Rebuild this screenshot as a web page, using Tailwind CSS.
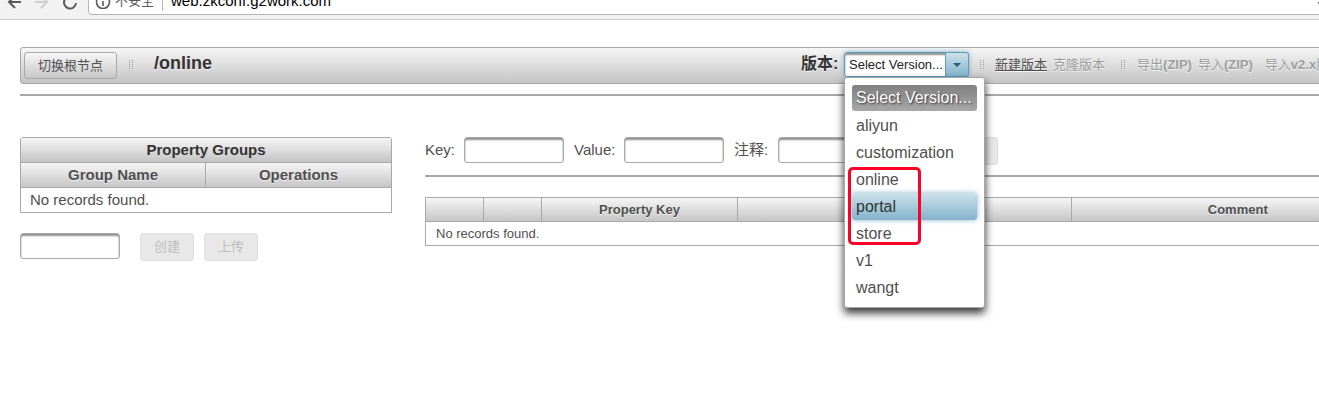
<!DOCTYPE html>
<html lang="zh-CN">
<head>
<meta charset="utf-8">
<title>zkconf</title>
<script src="https://cdn.jsdelivr.net/npm/@tailwindcss/browser@4"></script>
</head>
<body class="min-h-screen overflow-x-hidden bg-white font-['Liberation_Sans','Noto_Sans_CJK_SC',sans-serif] text-base text-[#4f4f4f]">

<!-- Browser address bar -->
<header class="flex h-5 items-end overflow-hidden border-b border-[#cccccc] bg-[#f2f2f2] pl-1.5">
  <nav class="flex h-8 shrink-0 items-center gap-3 pb-0.5">
    <button aria-label="Back" class="size-4"><svg viewBox="0 0 16 16" class="size-4" fill="none" stroke="#5a5a5a" stroke-width="2"><path d="M15 8H3M9 2L3 8l6 6"/></svg></button>
    <button aria-label="Forward" class="size-4" disabled><svg viewBox="0 0 16 16" class="size-4" fill="none" stroke="#cfcfcf" stroke-width="2"><path d="M1 8h12M7 2l6 6-6 6"/></svg></button>
    <button aria-label="Reload" class="size-4"><svg viewBox="0 0 16 16" class="size-4" fill="none" stroke="#5a5a5a" stroke-width="2"><path d="M14 9A6 6 0 1 1 12 4"/></svg></button>
  </nav>
  <div class="mb-1 ml-[10px] -mr-4 flex h-7 grow items-center rounded-sm border border-[#b5b5b5] bg-white pl-1.5 text-[15px] text-black">
    <svg viewBox="0 0 16 16" class="size-4" fill="none" stroke="#5a5a5a" stroke-width="1.6"><circle cx="8" cy="9" r="6.5"/><path d="M8 8v5M8 5v2"/></svg>
    <span class="ml-1 text-[13px] text-[#5a5a5a]">不安全</span>
    <span class="mx-2 h-5 border-l border-[#b5b5b5]"></span>
    <span>web.zkconf.g2work.com</span>
    <svg viewBox="0 0 16 16" class="ml-auto size-4" fill="#5a5a5a"><path d="M8 0l2 4 5 1-4 3 1 5-4-2-7 1-1-3 4-1-3-3 5-1z"/></svg>
  </div>
</header>

<main class="-mr-[86px] pl-5 pt-[27px]">
  <!-- Toolbar -->
  <div class="flex h-[37px] items-center rounded-[3px] border border-[#a8a8a8] bg-linear-to-b from-[#f6f6f6] to-[#c4c4c4] pb-0.5 pl-[3px] text-[13px] [text-shadow:0_1px_0_rgba(255,255,255,.7)]">
    <button class="mt-1 h-[27px] w-[93px] shrink-0 self-start rounded-[3px] border border-[#a8a8a8] bg-linear-to-b from-[#f6f6f6] to-[#c8c8c8] leading-6">切换根节点</button>
    <svg viewBox="0 0 4 10" class="ml-3 h-[10px] w-1 shrink-0" fill="#999"><path d="M0 0h1v1H0zM3 0h1v1H3zM0 2h1v1H0zM3 2h1v1H3zM0 4h1v1H0zM3 4h1v1H3zM0 6h1v1H0zM3 6h1v1H3zM0 8h1v1H0zM3 8h1v1H3z"/></svg>
    <h1 class="ml-[21px] w-[647px] shrink-0 pb-1 text-lg font-bold text-[#333]">/online</h1>
    <label for="version" class="w-[43px] shrink-0 pb-0.5 text-base font-bold text-[#333]">版本:</label>
    <div class="relative h-[25px] w-[125px] shrink-0 rounded-[3px] shadow-[0_0_5px_#85b2cb]">
      <select id="version" class="block h-[25px] w-full appearance-none rounded-[3px] border border-[#5f9bb7] bg-white pl-1 pr-6 text-[13px] text-[#222] shadow-[inset_0_2px_2px_#8f8f8f]">
        <option>Select Version...</option><option>aliyun</option><option>customization</option><option>online</option><option>portal</option><option>store</option><option>v1</option><option>wangt</option>
      </select>
      <span class="pointer-events-none absolute inset-y-0 right-0 flex w-6 items-center justify-center rounded-r-[3px] border border-[#5f9bb7] bg-linear-to-b from-[#cce1ea] to-[#83b3cc]"><svg viewBox="0 0 8 4" class="h-1 w-2" fill="#2d5972"><path d="M0 0h8L4 4z"/></svg></span>

      <!-- Open version list -->
      <ul role="listbox" aria-label="版本" class="absolute left-0 top-[25px] z-10 h-[231px] w-[141px] rounded-[3px] border border-[#a8a8a8] bg-white p-[7px] text-base leading-[27px] text-[#4f4f4f] shadow-[0_5px_8px_#000c] [text-shadow:none]">
        <li role="option" aria-selected="true" class="mb-px h-[26px] rounded-[3px] bg-linear-to-b from-[#808080] to-[#a8a8a8] px-1 leading-[26px] text-white [text-shadow:1px_1px_2px_#333]">Select Version...</li>
        <li role="option" class="px-1">aliyun</li>
        <li role="option" class="px-1">customization</li>
        <li role="option" class="px-1">online</li>
        <li role="option" class="rounded-[3px] bg-linear-to-b from-[#cce1ea] to-[#83b3cc] px-1 text-[#333] shadow-[0_0_5px_#85b2cb]">portal</li>
        <li role="option" class="px-1">store</li>
        <li role="option" class="px-1">v1</li>
        <li role="option" class="px-1">wangt</li>
      </ul>
      <div class="pointer-events-none absolute left-1 top-[115px] z-20 h-[78px] w-[73px] rounded-[5px] border-3 border-[#ff0028]"></div>
    </div>
    <svg viewBox="0 0 4 10" class="ml-[11px] h-[10px] w-1 shrink-0" fill="#999"><path d="M0 0h1v1H0zM3 0h1v1H3zM0 2h1v1H0zM3 2h1v1H3zM0 4h1v1H0zM3 4h1v1H3zM0 6h1v1H0zM3 6h1v1H3zM0 8h1v1H0zM3 8h1v1H3z"/></svg>
    <a href="#" class="ml-[11px] shrink-0 underline">新建版本</a>
    <span class="ml-[6px] shrink-0 text-[#9d9d9d]">克隆版本</span>
    <svg viewBox="0 0 4 10" class="ml-4 h-[10px] w-1 shrink-0" fill="#999"><path d="M0 0h1v1H0zM3 0h1v1H3zM0 2h1v1H0zM3 2h1v1H3zM0 4h1v1H0zM3 4h1v1H3zM0 6h1v1H0zM3 6h1v1H3zM0 8h1v1H0zM3 8h1v1H3z"/></svg>
    <span class="ml-3 shrink-0 text-[#9d9d9d]">导出<b>(ZIP)</b></span>
    <span class="ml-[6px] shrink-0 text-[#9d9d9d]">导入<b>(ZIP)</b></span>
    <span class="ml-3 shrink-0 text-[#9d9d9d]">导入<b>v2.x</b>版本</span>
  </div>
  <hr class="mt-[10px] border-t-2 border-[#a8a8a8]">

  <div class="mt-[41px] flex items-start gap-[33px]">
    <!-- Property groups -->
    <section class="w-[372px] shrink-0">
      <div class="overflow-hidden rounded-t-[3px] border border-[#a8a8a8]">
        <table class="w-full table-fixed border-separate border-spacing-0 text-[15px] leading-6">
          <caption class="h-[25px] border-b border-[#a8a8a8] bg-linear-to-b from-[#f6f6f6] to-[#c4c4c4] font-bold text-[#333]">Property Groups</caption>
          <thead><tr class="bg-linear-to-b from-[#f6f6f6] to-[#c4c4c4] [text-shadow:0_1px_0_rgba(255,255,255,.7)]"><th class="border-b border-r border-[#a8a8a8] p-0">Group Name</th><th class="border-b border-[#a8a8a8] p-0">Operations</th></tr></thead>
          <tbody><tr><td colspan="2" class="p-0 pl-[9px]">No records found.</td></tr></tbody>
        </table>
      </div>
      <form class="mt-5 flex items-start">
        <input aria-label="Group name" class="h-[26px] w-[100px] rounded-[3px] border border-[#a8a8a8] px-1 shadow-[inset_0_2px_2px_#8f8f8f]">
        <button type="button" disabled class="ml-5 h-7 w-[54px] rounded-[3px] border border-[#dfdfdf] bg-[#e8e8e8] text-[13px] leading-6 text-[#bdbdbd]">创建</button>
        <button type="button" disabled class="ml-[10px] h-7 w-[54px] rounded-[3px] border border-[#dfdfdf] bg-[#e8e8e8] text-[13px] leading-6 text-[#bdbdbd]">上传</button>
      </form>
    </section>

    <!-- Properties -->
    <section class="min-w-0 grow">
      <form class="flex h-7 items-start text-[15px] leading-[26px]">
        <label for="key" class="w-[39px]">Key:</label>
        <input id="key" class="h-[26px] w-[100px] rounded-[3px] border border-[#a8a8a8] px-1 shadow-[inset_0_2px_2px_#8f8f8f]">
        <label for="value" class="ml-[10px] w-[50px]">Value:</label>
        <input id="value" class="h-[26px] w-[100px] rounded-[3px] border border-[#a8a8a8] px-1 shadow-[inset_0_2px_2px_#8f8f8f]">
        <label for="comment" class="ml-[10px] w-11">注释:</label>
        <input id="comment" class="h-[26px] w-[100px] rounded-[3px] border border-[#a8a8a8] px-1 shadow-[inset_0_2px_2px_#8f8f8f]">
        <button type="button" disabled aria-label="创建" class="ml-[66px] h-7 w-[54px] rounded-[3px] border border-[#dfdfdf] bg-[#e8e8e8]"></button>
      </form>
      <hr class="mt-[10px] border-t-2 border-[#a8a8a8]">
      <table class="mt-5 w-full table-fixed border-collapse border border-[#a8a8a8] text-[13px] leading-[23px]">
        <colgroup><col class="w-[58px]"><col class="w-[58px]"><col class="w-[196px]"><col><col></colgroup>
        <thead><tr class="h-6 bg-linear-to-b from-[#f6f6f6] to-[#c4c4c4] [text-shadow:0_1px_0_rgba(255,255,255,.7)]">
          <th class="border border-[#a8a8a8] p-0"></th><th class="border border-[#a8a8a8] p-0"></th><th class="border border-[#a8a8a8] p-0">Property Key</th><th class="border border-[#a8a8a8] p-0"></th><th class="border border-[#a8a8a8] p-0">Comment</th>
        </tr></thead>
        <tbody><tr><td colspan="5" class="p-0 pl-[10px]">No records found.</td></tr></tbody>
      </table>
    </section>
  </div>
</main>
</body>
</html>
